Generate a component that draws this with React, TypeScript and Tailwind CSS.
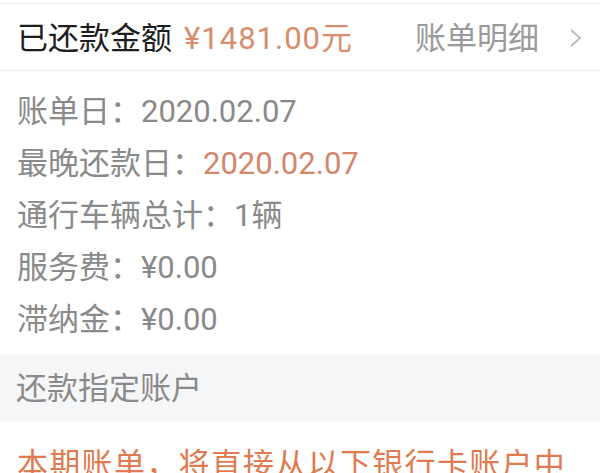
import React from "react";

const rows: { label: string; value: string; highlight?: boolean }[] = [
  { label: "账单日：", value: "2020.02.07" },
  { label: "最晚还款日：", value: "2020.02.07", highlight: true },
  { label: "通行车辆总计：", value: "1辆" },
  { label: "服务费：", value: "¥0.00" },
  { label: "滞纳金：", value: "¥0.00" },
];

export default function App() {
  return (
    <div
      className="w-[600px] h-[473px] overflow-hidden bg-white text-[31px] leading-none"
      style={{ fontFamily: '"Roboto", "Noto Sans CJK SC", sans-serif' }}
    >
      {/* Header */}
      <div className="mt-[3px] border-t border-[#ececec] h-[68px] flex items-center justify-between pl-[17px] pr-[17px] border-b">
        <div className="flex items-center pt-[2px]">
          <span className="text-[#1e1e1e]">已还款金额</span>
          <span className="ml-[12px] text-[#d88d6c] tracking-[1px]">¥1481.00元</span>
        </div>
        <div className="flex items-center pt-[2px]">
          <span className="text-[#9a9a9a]">账单明细</span>
          <svg width="14" height="20" viewBox="0 0 14 20" className="ml-[30px]">
            <path d="M2 2 L11 10 L2 18" fill="none" stroke="#bdbdbd" strokeWidth="2" />
          </svg>
        </div>
      </div>

      {/* Bill info */}
      <div className="pt-[14px] pb-[10px] pl-[17px]">
        {rows.map((r) => (
          <div key={r.label} className="h-[52px] flex items-center text-[#8a8a8a]">
            <span>{r.label}</span>
            <span className={r.highlight ? "text-[#d4866a]" : ""}>{r.value}</span>
          </div>
        ))}
      </div>

      {/* Section title */}
      <div className="h-[66px] bg-[#f5f6f8] flex items-center pl-[16px] text-[#8a8a8a]">
        还款指定账户
      </div>

      {/* Notice */}
      <div className="pt-[28px] pl-[17px] text-[#e07a50] whitespace-nowrap tracking-[1.3px]">
        本期账单，将直接从以下银行卡账户中
      </div>
    </div>
  );
}
